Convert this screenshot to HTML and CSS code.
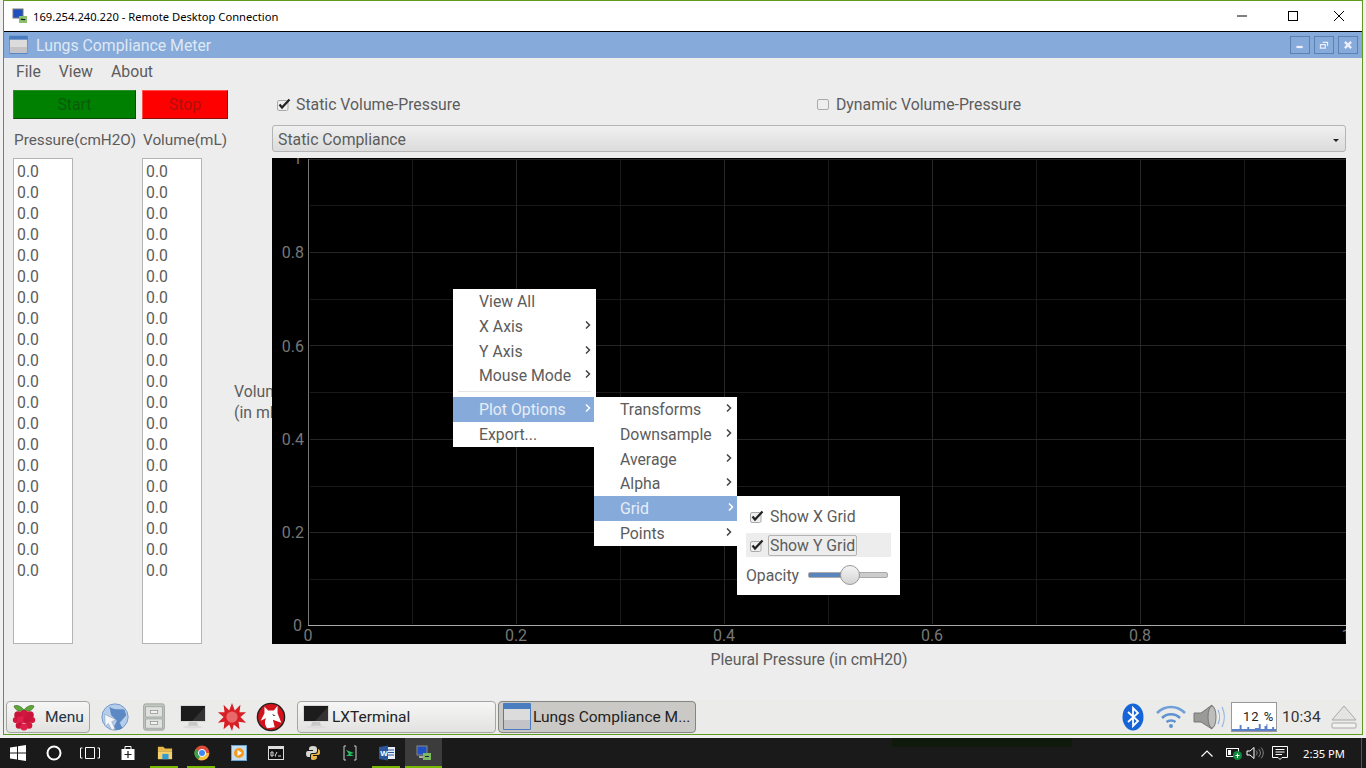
FILE: index.html
```html
<!DOCTYPE html>
<html lang="en">
<head>
    <meta charset="UTF-8">
    <title>Lungs Compliance Meter</title>
    <link rel="stylesheet" href="styles.css">
</head>
<body>
    <svg class="defs" width="0" height="0">
        <symbol id="monitor" viewBox="0 0 30 30">
            <rect x="2" y="3" width="26" height="17" rx="1" fill="#d8d8d8"/>
            <rect x="3" y="4" width="24" height="15" fill="#1c1c1c"/>
            <path d="M14 19 L27 5 V19 Z" fill="#333"/>
            <path d="M11 20 H19 L20 24 H10 Z" fill="#c8c8c8"/>
            <ellipse cx="15" cy="25" rx="10" ry="1.5" fill="#ddd"/>
        </symbol>
        <symbol id="app-window" viewBox="0 0 30 30">
            <rect x="1" y="1" width="28" height="27" rx="1" fill="#4a7cc0"/>
            <rect x="2" y="7" width="26" height="20" fill="#dcdcdc"/>
            <rect x="2" y="18" width="26" height="9" fill="#c4c4c8"/>
        </symbol>
        <symbol id="arrow" viewBox="0 0 6 8">
            <path d="M1 0.5 L4.5 4 L1 7.5" fill="none" stroke="currentColor" stroke-width="1.5"/>
        </symbol>
        <symbol id="checkmark" viewBox="0 0 14 13">
            <rect x="0.5" y="2.5" width="10.5" height="10" rx="1.5" fill="#eee" stroke="#aaa"/>
            <path d="M2.5 6.500 L5 9.500 L12.500 1.500" fill="none" stroke="#222" stroke-width="2.200"/>
        </symbol>
    </svg>

    <div class="rdp">
        <div class="rdp-title">
            <svg class="rdp-icon" viewBox="0 0 16 16">
                <rect x="1" y="1" width="10" height="9" fill="#2050c0" stroke="#777"/>
                <rect x="7" y="8" width="8" height="7" fill="#8cbf6a"/>
                <path d="M9 11.5 H13 M9 11.5 L10 10.5 M13 11.5 L12 12.5" stroke="#123" fill="none"/>
            </svg>
            <span class="rdp-name">169.254.240.220 - Remote Desktop Connection</span>
            <div class="rdp-controls">
                <svg viewBox="0 0 46 30"><path d="M13 15 H23" stroke="#000"/></svg>
                <svg viewBox="0 0 46 30"><rect x="18.5" y="10.5" width="9" height="9" fill="none" stroke="#000"/></svg>
                <svg viewBox="0 0 46 30"><path d="M18 10 L28 20 M28 10 L18 20" stroke="#000" fill="none"/></svg>
            </div>
        </div>

        <div class="remote">
            <div class="win-title">
                <svg class="win-icon"><use href="#app-window"/></svg>
                <span class="win-name">Lungs Compliance Meter</span>
                <div class="win-controls">
                    <button class="win-btn"><svg viewBox="0 0 20 18"><rect x="6" y="10" width="7" height="2.5" fill="#eef"/></svg></button>
                    <button class="win-btn"><svg viewBox="0 0 20 18"><path d="M8.5 6 H14 V10 M6 8.5 H11.5 V12.5 H6 Z" fill="none" stroke="#eef" stroke-width="1.3"/></svg></button>
                    <button class="win-btn"><svg viewBox="0 0 20 18"><path d="M6.5 5.5 L13.5 12.5 M13.5 5.5 L6.5 12.5" stroke="#eef" stroke-width="2.6"/></svg></button>
                </div>
            </div>

            <div class="menubar">
                <span class="menubar-item">File</span>
                <span class="menubar-item">View</span>
                <span class="menubar-item">About</span>
            </div>

            <div class="main">
                <button class="btn-start">Start</button>
                <button class="btn-stop">Stop</button>
                <div class="spacer"></div>
                <div class="checks">
                    <label class="check"><svg class="check-box"><use href="#checkmark"/></svg>Static Volume-Pressure</label>
                    <label class="check"><span class="check-empty"></span>Dynamic Volume-Pressure</label>
                </div>

                <div class="col-label">Pressure(cmH2O)</div>
                <div class="col-label">Volume(mL)</div>
                <div class="spacer"></div>
                <div class="combo">Static Compliance<span class="combo-arrow"></span></div>

                <div class="list">
                    <div>0.0</div><div>0.0</div><div>0.0</div><div>0.0</div><div>0.0</div>
                    <div>0.0</div><div>0.0</div><div>0.0</div><div>0.0</div><div>0.0</div>
                    <div>0.0</div><div>0.0</div><div>0.0</div><div>0.0</div><div>0.0</div>
                    <div>0.0</div><div>0.0</div><div>0.0</div><div>0.0</div><div>0.0</div>
                </div>
                <div class="list">
                    <div>0.0</div><div>0.0</div><div>0.0</div><div>0.0</div><div>0.0</div>
                    <div>0.0</div><div>0.0</div><div>0.0</div><div>0.0</div><div>0.0</div>
                    <div>0.0</div><div>0.0</div><div>0.0</div><div>0.0</div><div>0.0</div>
                    <div>0.0</div><div>0.0</div><div>0.0</div><div>0.0</div><div>0.0</div>
                </div>
                <div class="y-label">Volume<br>(in mL)</div>
                <svg class="plot" viewBox="0 0 1074 486">
                    <rect width="1074" height="486" fill="#000"/>
                    <path class="grid-minor" d="M140 1V466 M348 1V466 M556 1V466 M764 1V466 M972 1V466 M38 47.5H1074 M38 141H1074 M38 234.5H1074 M38 328H1074 M38 421.500H1074"/>
                    <path class="grid-major" d="M244 1V466 M452 1V466 M660 1V466 M868 1V466 M1076 1V466 M38 94.500H1074 M38 187.500H1074 M38 281H1074 M38 374.500H1074 M36 1.500H1074"/>
                    <path class="axis-left" d="M36 1V468"/>
                    <path class="axis-bottom" d="M36 467.500H1074"/>
                    <text class="tick tick-y" x="30" y="6">1</text>
                    <text class="tick tick-y" x="32" y="100">0.8</text>
                    <text class="tick tick-y" x="32" y="193.500">0.6</text>
                    <text class="tick tick-y" x="32" y="287">0.4</text>
                    <text class="tick tick-y" x="32" y="380">0.2</text>
                    <text class="tick tick-y" x="30" y="473">0</text>
                    <text class="tick tick-x" x="36" y="483">0</text>
                    <text class="tick tick-x" x="244" y="483">0.2</text>
                    <text class="tick tick-x" x="452" y="483">0.4</text>
                    <text class="tick tick-x" x="660" y="483">0.6</text>
                    <text class="tick tick-x" x="868" y="483">0.8</text>
                    <text class="tick tick-x" x="1074" y="483">1</text>
                </svg>

                <div class="spacer"></div>
                <div class="spacer"></div>
                <div class="spacer"></div>
                <div class="x-label">Pleural Pressure (in cmH20)</div>
            </div>

            <!-- context menu, sits over the plot -->
            <div class="menu menu-main">
                <div class="menu-item">View All</div>
                <div class="menu-item">X Axis<svg class="menu-arrow"><use href="#arrow"/></svg></div>
                <div class="menu-item">Y Axis<svg class="menu-arrow"><use href="#arrow"/></svg></div>
                <div class="menu-item">Mouse Mode<svg class="menu-arrow"><use href="#arrow"/></svg></div>
                <div class="menu-sep"></div>
                <div class="menu-item active">Plot Options<svg class="menu-arrow"><use href="#arrow"/></svg></div>
                <div class="menu-item">Export...</div>
            </div>
            <div class="menu menu-sub">
                <div class="menu-item">Transforms<svg class="menu-arrow"><use href="#arrow"/></svg></div>
                <div class="menu-item">Downsample<svg class="menu-arrow"><use href="#arrow"/></svg></div>
                <div class="menu-item">Average<svg class="menu-arrow"><use href="#arrow"/></svg></div>
                <div class="menu-item">Alpha<svg class="menu-arrow"><use href="#arrow"/></svg></div>
                <div class="menu-item active">Grid<svg class="menu-arrow"><use href="#arrow"/></svg></div>
                <div class="menu-item">Points<svg class="menu-arrow"><use href="#arrow"/></svg></div>
            </div>
            <div class="menu menu-grid">
                <div class="grid-row"><svg class="grid-check"><use href="#checkmark"/></svg><span class="grid-text">Show X Grid</span></div>
                <div class="grid-row hover"><svg class="grid-check"><use href="#checkmark"/></svg><span class="grid-text focus">Show Y Grid</span></div>
                <div class="opacity-row">
                    <span>Opacity</span>
                    <div class="slider"><div class="slider-fill"></div><div class="slider-knob"></div></div>
                </div>
            </div>

            <div class="panel">
                <button class="panel-menu">
                    <svg class="panel-rpi" viewBox="0 0 24 28">
                        <path d="M12 7 C8 2 4 2 2 3 C3 7 7 9 12 8 C17 9 21 7 22 3 C20 2 16 2 12 7 Z" fill="#5fa83a" stroke="#2c5a18" stroke-width=".6"/>
                        <circle cx="12" cy="11" r="4" fill="#d2163c"/>
                        <circle cx="6" cy="12" r="3.800" fill="#c8143a"/>
                        <circle cx="18" cy="12" r="3.800" fill="#c8143a"/>
                        <circle cx="3.800" cy="17" r="3" fill="#d2163c"/>
                        <circle cx="20.200" cy="17" r="3" fill="#d2163c"/>
                        <circle cx="9" cy="17" r="3.800" fill="#e0204a"/>
                        <circle cx="15" cy="17" r="3.800" fill="#c8143a"/>
                        <circle cx="7" cy="22.500" r="3.300" fill="#c8143a"/>
                        <circle cx="17" cy="22.500" r="3.300" fill="#d2163c"/>
                        <circle cx="12" cy="24" r="3.500" fill="#e0204a"/>
                    </svg>
                    <span>Menu</span>
                </button>
                <div class="launchers">
                    <svg class="launcher" viewBox="0 0 32 32">
                        <circle cx="16" cy="16" r="14" fill="#b4cdea" stroke="#6f97c8"/>
                        <path d="M10 5 C15 9 22 7 26 8 L28 14 L21 22 L24 28 C20 30 16 30 14 28 L18 20 L12 14 Z" fill="#3f72b5" opacity=".75"/>
                        <path d="M5 13 L17 19 L12.500 21 L16 28.500 L12.500 30 L9 23 L5.500 26 Z" fill="#f4f6fa" stroke="#8a9bb0" stroke-width=".6"/>
                    </svg>
                    <svg class="launcher" viewBox="0 0 32 32">
                        <rect x="5" y="2" width="22" height="28" rx="2" fill="#c4c9c4" stroke="#9a9f9a"/>
                        <rect x="7" y="5" width="18" height="11" fill="#dfe2df" stroke="#a4a8a4"/>
                        <rect x="7" y="18" width="18" height="10" fill="#dfe2df" stroke="#a4a8a4"/>
                        <rect x="12" y="9" width="8" height="3" fill="#f2f2f2" stroke="#777" stroke-width=".6"/>
                        <rect x="12" y="21" width="8" height="3" fill="#f2f2f2" stroke="#777" stroke-width=".6"/>
                    </svg>
                    <svg class="launcher"><use href="#monitor"/></svg>
                    <svg class="launcher" viewBox="0 0 32 32">
                        <path d="M16 1 L19 9 L25 3 L24 11 L31 11 L25 16 L31 22 L23 21 L24 29 L18 24 L16 31 L13 24 L7 29 L8 21 L1 22 L7 16 L1 11 L8 11 L7 3 L13 9 Z" fill="#d81f26"/>
                        <circle cx="16" cy="16" r="6" fill="#e9686a"/>
                    </svg>
                    <svg class="launcher" viewBox="0 0 32 32">
                        <circle cx="16" cy="16" r="14.500" fill="#d3131b" stroke="#222" stroke-width="1.500"/>
                        <path d="M9 5 L13 9 L19 9 L23 4 L23 12 L27 22 L18 19 L20 27 L12 28 C9 24 9 20 11 17 L5 20 L9 12 Z" fill="#fff"/>
                        <path d="M17 13 L21 14 L19 15 Z" fill="#222"/>
                    </svg>
                </div>
                <div class="task">
                    <svg class="task-icon"><use href="#monitor"/></svg>
                    <span class="task-name">LXTerminal</span>
                </div>
                <div class="task task-active">
                    <svg class="task-icon"><use href="#app-window"/></svg>
                    <span class="task-name">Lungs Compliance M...</span>
                </div>
                <div class="tray">
                    <svg class="tray-bt" viewBox="0 0 22 28">
                        <ellipse cx="11" cy="14" rx="10.500" ry="13.500" fill="#1565d8"/>
                        <path d="M6 9 L16 18 L11 23 V5 L16 10 L6 19" fill="none" stroke="#fff" stroke-width="1.800"/>
                    </svg>
                    <svg class="tray-wifi" viewBox="0 0 30 24">
                        <path d="M1 8 C9 0 21 0 29 8" fill="none" stroke="#6f9fd8" stroke-width="2.500"/>
                        <path d="M6 13 C11 8 19 8 24 13" fill="none" stroke="#5f92d0" stroke-width="2.500"/>
                        <path d="M10.500 17 C13 15 17 15 19.500 17" fill="none" stroke="#5f92d0" stroke-width="2.500"/>
                        <circle cx="15" cy="21" r="2" fill="#5f92d0"/>
                    </svg>
                    <svg class="tray-vol" viewBox="0 0 34 28">
                        <path d="M1 10 H8 L19 2 V26 L8 19 H1 Z" fill="#9a9a98" stroke="#777"/>
                        <ellipse cx="19" cy="14" rx="4" ry="11" fill="#bdbdbb" stroke="#777"/>
                        <path d="M25 7 C27 11 27 17 25 21 M29 4 C32 10 32 18 29 24" fill="none" stroke="#8fb2dc" stroke-width="1.200"/>
                    </svg>
                    <div class="cpu">
                        <span class="cpu-text">12 %</span>
                        <svg class="cpu-graph" viewBox="0 0 46 9" preserveAspectRatio="none">
                            <path d="M0 9 V7 H8 V3 H10 V7 H16 V5 H18 V7 H24 V6 H28 V2 H30 V7 H34 V4 H36 V2 H37 V7 H42 V5 H44 V7 H46 V9 Z" fill="#5b7ec8"/>
                        </svg>
                    </div>
                    <span class="clock">10:34</span>
                    <svg class="tray-eject" viewBox="0 0 26 24">
                        <path d="M13 1 L25 15 H1 Z" fill="#e4e4e2" stroke="#a8a8a6"/>
                        <rect x="1" y="18" width="24" height="5" rx="1" fill="#f2f2f0" stroke="#a8a8a6"/>
                    </svg>
                </div>
            </div>
        </div>
    </div>

    <div class="winbar">
        <svg class="wb-icon" viewBox="0 0 16 16"><path d="M0 2.500 L7 1.500 V7.500 H0 Z M8 1.300 L16 0 V7.500 H8 Z M0 8.500 H7 V14.500 L0 13.500 Z M8 8.500 H16 V16 L8 14.700 Z" fill="#fff"/></svg>
        <svg class="wb-icon" viewBox="0 0 16 16"><circle cx="8" cy="8" r="6.500" fill="none" stroke="#fff" stroke-width="2"/></svg>
        <svg class="wb-icon wb-wide" viewBox="0 0 20 14"><path d="M5.500 1.500 H14.500 V12.500 H5.500 Z M2.500 2 H0.500 V12 H2.500 M17.500 2 H19.500 V12 H17.500" fill="none" stroke="#fff"/></svg>
        <svg class="wb-icon" viewBox="0 0 16 16"><path d="M5 4 V1.500 H11 V4" fill="none" stroke="#fff"/><path d="M1.500 4 H14.500 V15 H1.500 Z" fill="#fff"/><path d="M8 6 V13 M4.500 9.500 H11.500" stroke="#1a1a1a" stroke-width="1.200"/></svg>
        <div class="wb-app running"><svg viewBox="0 0 18 16"><path d="M1 1 H7 L9 3 H17 V6 H1 Z" fill="#e8b84a"/><path d="M1 6 H17 V15 H1 Z" fill="#f5d06a"/><rect x="6" y="9" width="7" height="6" fill="#2f9ed8"/></svg></div>
        <div class="wb-app running"><svg viewBox="0 0 16 16"><circle cx="8" cy="8" r="7.500" fill="#dd4b3a"/><path d="M8 8 L15 8 A7.500 7.500 0 0 1 4 14.500 Z" fill="#f5c33b"/><path d="M8 8 L4 14.500 A7.500 7.500 0 0 1 1.500 4 Z" fill="#3ca24a"/><circle cx="8" cy="8" r="3.600" fill="#4285f4" stroke="#fff"/></svg></div>
        <div class="wb-app"><svg viewBox="0 0 16 16"><rect x="0.500" y="0.500" width="15" height="15" fill="#c6def0" stroke="#6aa4d0"/><circle cx="8" cy="8" r="5" fill="#f39a1e"/><path d="M6.500 5 L11 8 L6.500 11 Z" fill="#fff"/></svg></div>
        <div class="wb-app"><svg viewBox="0 0 16 14"><rect x="0.500" y="0.500" width="15" height="13" fill="#111" stroke="#ddd"/><rect x="1" y="1" width="14" height="2" fill="#ddd"/><path d="M3 6 H5 V10 H3 Z M7 10 H8 M9 6 L7 10 M10 10 H13" stroke="#ddd" fill="none"/></svg></div>
        <div class="wb-app"><svg viewBox="0 0 16 16"><path d="M8 1 C5 1 4 2 4 4 V5 H8 V6 H3 C1 6 1 8 1 9 C1 11 2 12 3 12 H5 V10 C5 9 6 8 7 8 H10 C11 8 12 7 12 6 V4 C12 2 11 1 8 1 Z" fill="#d8d8d2"/><path d="M8 15 C11 15 12 14 12 12 V11 H8 V10 H13 C15 10 15 8 15 7 C15 5 14 4 13 4 H13 V6 C13 8 12 9 10 9 H7 C6 9 6 10 6 11 V13 C6 14 6 15 8 15 Z" fill="#e8b848"/></svg></div>
        <div class="wb-app"><svg viewBox="0 0 16 16"><path d="M4 1 H2 V15 H4 M12 1 H14 V15 H12" fill="none" stroke="#ccc"/><path d="M4 5 L12 8 L8 9 L12 11 H4 L7 9 Z" fill="#22c55e"/></svg></div>
        <div class="wb-app running"><svg viewBox="0 0 16 16"><rect x="5" y="2" width="11" height="12" fill="#e8eef8"/><path d="M8 5 H15 M8 7.500 H15 M8 10 H15" stroke="#2b579a"/><path d="M0 2 L9 0.500 V15.500 L0 14 Z" fill="#2b579a"/><text class="wb-word" x="1.200" y="11">W</text></svg></div>
        <div class="wb-app running current"><svg viewBox="0 0 16 16"><rect x="1" y="1" width="10" height="9" fill="#2050c0" stroke="#888"/><rect x="3" y="11" width="6" height="2" fill="#aaa"/><rect x="7" y="8" width="8" height="7" fill="#7cb860"/><path d="M9 11.500 H13" stroke="#123"/></svg></div>

        <div class="wb-strip"></div>

        <div class="wb-tray">
            <svg class="wb-chevron" viewBox="0 0 12 7"><path d="M0.500 6.500 L6 1 L11.500 6.500" fill="none" stroke="#fff" stroke-width="1.200"/></svg>
            <svg class="wb-net" viewBox="0 0 16 14"><rect x="0.500" y="2.500" width="12" height="8" fill="none" stroke="#fff"/><rect x="2" y="4" width="3" height="5" fill="#fff"/><circle cx="11.500" cy="9.500" r="4.500" fill="#10893e"/><path d="M9.500 9.500 H13.500 M11.500 7.500 V12" stroke="#fff"/></svg>
            <svg class="wb-vol" viewBox="0 0 18 14"><path d="M1 5 H4 L8 1.500 V12.500 L4 9 H1 Z" fill="none" stroke="#fff"/><path d="M10 4.500 C11.500 6 11.500 8 10 9.500 M12.500 3 C15 5.500 15 8.500 12.500 11 M15 1.500 C18 5 18 9 15 12.500" fill="none" stroke="#888"/></svg>
            <svg class="wb-note" viewBox="0 0 16 16"><path d="M0.500 1.500 H15.500 V12.500 H10 L8 14.500 L6 12.500 H0.500 Z M3.500 4.500 H12.500 M3.500 7 H12.500 M3.500 9.500 H10" fill="none" stroke="#fff"/></svg>
            <span class="wb-clock">2:35 PM</span>
        </div>
    </div>
</body>
</html>
```

FILE: styles.css
```css
* {
    margin: 0;
    padding: 0;
    box-sizing: border-box;
}

body {
    width: 1366px;
    height: 768px;
    overflow: hidden;
    background-color: #f0f0f0;
    font-family: 'Roboto', sans-serif;
    font-size: 15.8px;
    color: #5c5c5c;
    display: flex;
    flex-direction: column;
}

.defs {
    position: absolute;
}

/* Remote desktop window */
.rdp {
    height: 735px;
    width: 1360px;
    margin-left: 3px;
    margin-bottom: 3px;
    border: 1px solid #5f9b1f;
    display: flex;
    flex-direction: column;
    background-color: #ededed;
}

.rdp-title {
    height: 31px;
    flex: none;
    background-color: #fff;
    border-bottom: 1px solid #000;
    display: flex;
    align-items: center;
    padding-left: 8px;
    font-family: 'Noto Sans', sans-serif;
    font-size: 11.2px;
    color: #000;
}

.rdp-icon {
    width: 16px;
    height: 16px;
    margin-right: 5px;
}

.rdp-name {
    flex: 1;
}

.rdp-controls {
    display: flex;
}

.rdp-controls svg {
    width: 46px;
    height: 30px;
}

.remote {
    position: relative;
    flex: 1;
    display: flex;
    flex-direction: column;
}

.win-title {
    height: 26px;
    flex: none;
    background-color: #86abda;
    display: flex;
    align-items: center;
    padding: 0 4px 0 4px;
}

.win-icon {
    width: 21px;
    height: 20px;
    margin-right: 7px;
}

.win-name {
    flex: 1;
    color: #dfe8f4;
}

.win-controls {
    display: flex;
    gap: 4px;
}

.win-btn {
    width: 20px;
    height: 18px;
    background-color: #86abda;
    border: 1px solid #5a80b4;
    display: block;
}

.win-btn svg {
    display: block;
    width: 18px;
    height: 16px;
}

.menubar {
    height: 26px;
    flex: none;
    display: flex;
    align-items: center;
    padding-left: 12px;
}

.menubar-item {
    margin-right: 18px;
}

/* Main grid: two list columns, y label, plot */
.main {
    display: grid;
    grid-template-columns: 129px 86px 44px 1074px;
    grid-template-rows: 29px 27px 486px 26px;
    row-gap: 6px;
    padding: 6px 0 0 9px;
}

.btn-start, .btn-stop {
    font-family: 'Roboto', sans-serif;
    font-size: 15.8px;
    border: 1px solid;
    display: block;
}

.btn-start {
    width: 123px;
    background-color: #008000;
    color: #0a5c0a;
    border-color: #2c8f2c #0b4a0b #0b4a0b #2c8f2c;
}

.btn-stop {
    width: 86px;
    background-color: #ff0000;
    color: #b00f0f;
    border-color: #ff5050 #8f0d0d #8f0d0d #ff5050;
}

.checks {
    display: grid;
    grid-template-columns: 540px 1fr;
    padding-left: 5px;
    align-items: center;
}

.check {
    display: flex;
    align-items: center;
}

.check-box {
    width: 14px;
    height: 13px;
    margin-right: 5px;
    flex: none;
}

.check-empty {
    width: 12px;
    height: 11px;
    margin-right: 7px;
    flex: none;
    background-color: #eee;
    border: 1px solid #aaa;
    border-radius: 2px;
}

.col-label {
    align-self: center;
    padding-top: 2px;
    padding-left: 1px;
    white-space: nowrap;
    font-size: 15.3px;
}

.combo {
    height: 27px;
    padding-left: 5px;
    line-height: 27px;
    border: 1px solid #b4b4b4;
    border-radius: 3px;
    background: linear-gradient(#f0f0f0, #dcdcdc);
    position: relative;
}

.combo-arrow {
    position: absolute;
    right: 6px;
    top: 13px;
    border-style: solid;
    border-width: 3px 3.500px 0;
    border-color: #222 transparent transparent;
}

.list {
    width: 60px;
    background-color: #fff;
    border: 1px solid #b4b4b4;
    padding: 2px 0 0 3px;
}

.list div {
    height: 21px;
    line-height: 21px;
}

.y-label {
    align-self: center;
    width: 38px;
    margin-left: 6px;
    overflow: hidden;
    white-space: nowrap;
    line-height: 21px;
    padding-top: 1px;
}

.plot {
    width: 1074px;
    height: 486px;
    display: block;
}

.grid-minor, .grid-major {
    fill: none;
    shape-rendering: crispEdges;
}

.grid-minor {
    stroke: #191919;
}

.grid-major {
    stroke: #262626;
}

.axis-left {
    stroke: #777;
    fill: none;
    shape-rendering: crispEdges;
}

.axis-bottom {
    stroke: #aaa;
    fill: none;
    shape-rendering: crispEdges;
}

.tick {
    font-family: 'Roboto', sans-serif;
    font-size: 16px;
    fill: #777;
}

.tick-y {
    text-anchor: end;
}

.tick-x {
    text-anchor: middle;
}

.x-label {
    text-align: center;
    align-self: start;
    line-height: 19px;
}

/* Context menus */
.menu {
    position: absolute;
    background-color: #fff;
}

.menu-main {
    left: 449px;
    top: 257px;
    width: 143px;
}

.menu-sub {
    left: 590px;
    top: 365px;
    width: 143px;
}

.menu-grid {
    left: 733px;
    top: 464px;
    width: 163px;
    height: 99px;
}

.menu-item {
    height: 24.800px;
    line-height: 24.800px;
    padding: 1px 0 0 26px;
    position: relative;
}

.menu-item.active {
    background-color: #86abda;
    color: #e6edf7;
}

.menu-main .menu-item.active {
    width: 141px;
}

.menu-arrow {
    position: absolute;
    right: 5px;
    top: 7px;
    width: 6px;
    height: 8px;
    color: #444;
}

.menu-item.active .menu-arrow {
    color: #fff;
    right: 3px;
}

.menu-sep {
    height: 3.800px;
    margin: 0 5px 5px;
    border-bottom: 1px solid #e6e6e6;
}

.grid-row {
    display: flex;
    align-items: center;
    height: 24px;
    margin: 8px 9px 0 9px;
    padding-left: 4px;
}

.grid-row.hover {
    background-color: #ededed;
    margin-top: 5px;
}

.grid-check {
    width: 14px;
    height: 13px;
    margin-right: 4px;
    flex: none;
}

.grid-text {
    padding: 0 1px;
    border: 1px solid transparent;
    line-height: 19px;
}

.grid-text.focus {
    border-color: #b4b4b4;
    border-radius: 2px;
}

.opacity-row {
    display: flex;
    align-items: center;
    margin: 6px 9px 0 9px;
    height: 24px;
}

.slider {
    position: absolute;
    left: 71px;
    width: 80px;
    height: 6px;
    background-color: #ccc;
    border: 1px solid #aaa;
    border-radius: 2px;
}

.slider-fill {
    width: 40px;
    height: 4px;
    background-color: #5b85bd;
}

.slider-knob {
    position: absolute;
    left: 31px;
    top: -8px;
    width: 20px;
    height: 20px;
    border-radius: 50%;
    border: 1px solid #999;
    background: linear-gradient(#f4f4f4, #d4d4d4);
}

/* LXDE panel */
.panel {
    margin-top: auto;
    height: 34px;
    flex: none;
    display: flex;
    align-items: center;
    padding: 0 0 0 2px;
    background-color: #ebebe9;
    color: #222;
    font-size: 15.5px;
}

.panel-menu {
    width: 84px;
    height: 32px;
    display: flex;
    align-items: center;
    padding-left: 5px;
    font-family: 'Roboto', sans-serif;
    font-size: 15.5px;
    color: #234;
    background: linear-gradient(#f6f6f6, #e2e2e0);
    border: 1px solid #a5a5a3;
    border-radius: 4px;
}

.panel-rpi {
    width: 24px;
    height: 28px;
    margin-right: 9px;
}

.launchers {
    display: flex;
    align-items: center;
    gap: 9px;
    margin-left: 10px;
    width: 197px;
}

.launcher {
    width: 30px;
    height: 30px;
    flex: none;
}

.task {
    width: 199px;
    height: 32px;
    display: flex;
    align-items: center;
    padding-left: 3px;
    margin-right: 2px;
    border: 1px solid #a5a5a3;
    border-radius: 4px;
    background: linear-gradient(#f6f6f6, #e2e2e0);
    white-space: nowrap;
}

.task-active {
    width: 198px;
    background: #cbc9c6;
    border-color: #858583;
}

.task-icon {
    width: 30px;
    height: 30px;
    margin-right: 1px;
    flex: none;
}

.tray {
    margin-left: auto;
    display: flex;
    align-items: center;
    padding-right: 5px;
}

.tray-bt {
    width: 22px;
    height: 28px;
    margin-right: 12px;
}

.tray-wifi {
    width: 30px;
    height: 24px;
    margin-right: 7px;
}

.tray-vol {
    width: 34px;
    height: 28px;
    margin-right: 4px;
}

.cpu {
    width: 46px;
    height: 30px;
    background-color: #fff;
    border: 1px solid #999;
    position: relative;
    font-size: 13px;
    letter-spacing: 1px;
    color: #222;
    margin-right: 5px;
}

.cpu-text {
    position: absolute;
    left: 11px;
    top: 6px;
    white-space: nowrap;
}

.cpu-graph {
    position: absolute;
    left: 0;
    bottom: 0;
    width: 44px;
    height: 9px;
}

.clock {
    width: 49px;
    color: #333;
}

.tray-eject {
    width: 26px;
    height: 24px;
}

/* Windows taskbar */
.winbar {
    height: 30px;
    flex: none;
    background-color: #1a1a1a;
    display: flex;
    align-items: center;
    position: relative;
}

.wb-icon {
    width: 16px;
    height: 16px;
    margin-left: 10px;
    margin-right: 10px;
}

.wb-wide {
    width: 20px;
    margin-left: 8px;
}

.wb-app {
    width: 37px;
    height: 30px;
    display: flex;
    align-items: center;
    justify-content: center;
    position: relative;
}

.wb-app svg {
    width: 16px;
    height: 16px;
}

.wb-app.running::after {
    content: '';
    position: absolute;
    bottom: 0;
    left: 4px;
    right: 5px;
    height: 2px;
    background-color: #76b900;
}

.wb-app.current {
    background-color: #3c3c3c;
}

.wb-app.current::after {
    left: 0;
    right: 0;
}

.wb-word {
    font-family: 'Liberation Sans', sans-serif;
    font-size: 8px;
    font-weight: bold;
    fill: #fff;
}

.wb-strip {
    position: absolute;
    left: 892px;
    top: 0;
    width: 180px;
    height: 9px;
    background-color: #0f1a0c;
}

.wb-tray {
    margin-left: auto;
    width: 170px;
    height: 30px;
    display: flex;
    align-items: center;
    padding-left: 9px;
    color: #fff;
    font-size: 11.2px;
    font-family: 'Noto Sans', sans-serif;
    border-right: 1px solid #555;
    margin-right: 4px;
    white-space: nowrap;
}

.wb-chevron {
    width: 12px;
    height: 7px;
    margin-right: 13px;
}

.wb-net {
    width: 16px;
    height: 14px;
    margin-right: 4px;
}

.wb-vol {
    width: 18px;
    height: 14px;
    margin-right: 8px;
}

.wb-note {
    width: 16px;
    height: 16px;
    margin-right: 15px;
}
```
